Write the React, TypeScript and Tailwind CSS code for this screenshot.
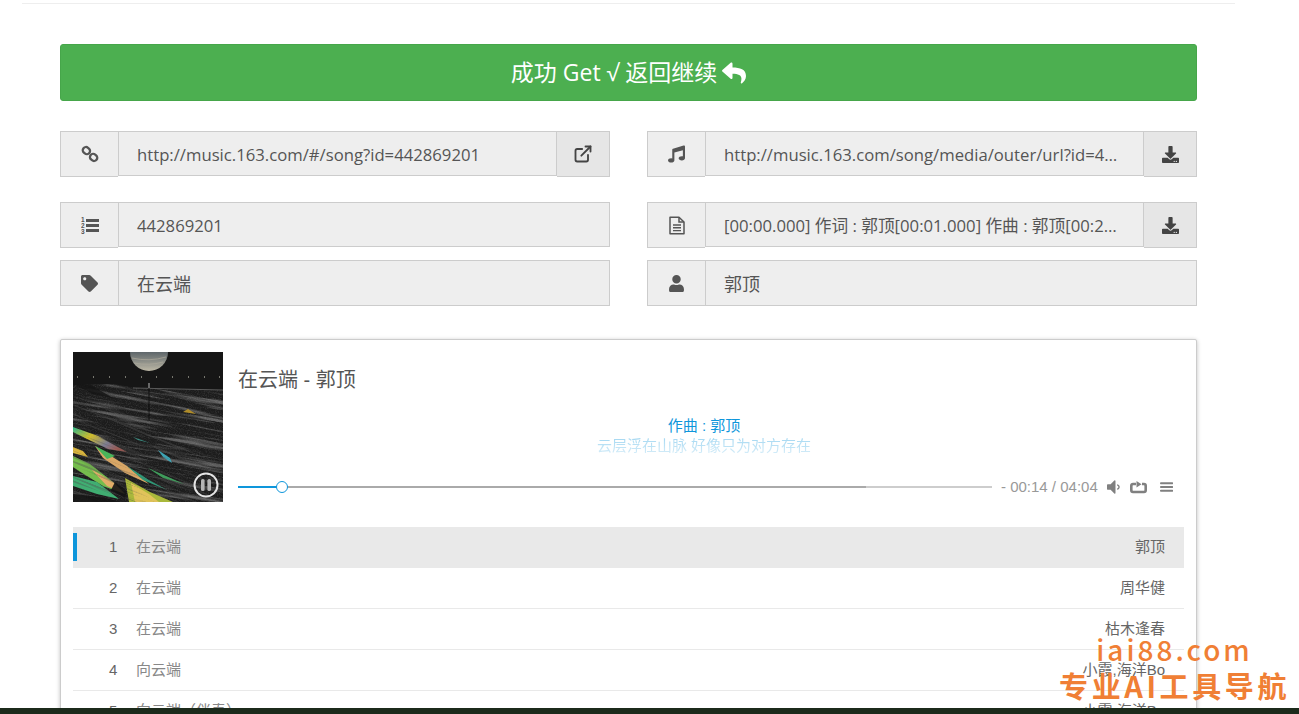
import type { ReactNode } from 'react';
import { ExternalLink } from 'lucide-react';
import { FaDownload, FaMusic, FaReply, FaTag, FaUser } from 'react-icons/fa';

const tracks = [
  { no: 1, title: '在云端', artist: '郭顶' },
  { no: 2, title: '在云端', artist: '周华健' },
  { no: 3, title: '在云端', artist: '枯木逢春' },
  { no: 4, title: '向云端', artist: '小霞,海洋Bo' },
  { no: 5, title: '向云端（伴奏）', artist: '小霞,海洋Bo' },
];

function LinkIcon() {
  return (
    <svg width="18" height="18" viewBox="0 0 18 18" fill="none" stroke="#555" strokeWidth="2.3">
      <rect x="1.6" y="2.4" width="7.6" height="6.4" rx="3.2" transform="rotate(40 5.4 5.6)" />
      <rect x="8.8" y="9.2" width="7.6" height="6.4" rx="3.2" transform="rotate(40 12.6 12.4)" />
    </svg>
  );
}

function ListIcon() {
  return (
    <svg width="18" height="20" viewBox="0 0 18 20" fill="#555">
      <rect x="5" y="4" width="13" height="3" />
      <rect x="5" y="9" width="13" height="3" />
      <rect x="5" y="14" width="13" height="3" />
      <text x="0" y="7" fontSize="6.5" fontWeight="700" fontFamily="Liberation Sans">1</text>
      <text x="0" y="13" fontSize="6.5" fontWeight="700" fontFamily="Liberation Sans">2</text>
      <text x="0" y="19" fontSize="6.5" fontWeight="700" fontFamily="Liberation Sans">3</text>
    </svg>
  );
}

function FileIcon() {
  return (
    <svg width="16" height="19" viewBox="0 0 16 19" fill="none" stroke="#555" strokeWidth="1.5">
      <path d="M1 1.2 H10 L15 6 V17.8 H1 Z" strokeLinejoin="round" />
      <path d="M10 1.2 V6 H15" />
      <path d="M4 9 H12 M4 11.8 H12 M4 14.6 H12" strokeWidth="1.4" />
    </svg>
  );
}

function Field({ icon, text, action, big, tall }: { icon: ReactNode; text: string; action?: ReactNode; big?: boolean; tall?: boolean }) {
  return (
    <div className="flex items-start min-w-0">
      <div className="w-[58px] h-[46px] shrink-0 flex items-center justify-center bg-[#eeeeee] border border-[#cccccc] border-r-0 text-[#555555]">
        {icon}
      </div>
      <div className={`flex-1 min-w-0 bg-[#eeeeee] border border-[#cccccc] pl-[18px] pr-[24px] text-[#555555] truncate ${tall ? 'h-[46px] leading-[46px]' : 'h-[45px] leading-[45px]'} ${big ? 'text-[18px]' : 'text-[16.7px]'}`}>
        {text}
      </div>
      {action && (
        <div className="w-[53px] h-[46px] shrink-0 flex items-center justify-center bg-[#e6e6e6] border border-[#cccccc] border-l-0 text-[#444444]">
          {action}
        </div>
      )}
    </div>
  );
}

function AlbumArt() {
  return (
    <svg className="w-[150px] h-[150px] shrink-0" viewBox="0 0 150 150">
      <defs>
        <filter id="streaks" x="0" y="0" width="100%" height="100%">
          <feTurbulence type="fractalNoise" baseFrequency="0.012 0.3" numOctaves="3" seed="4" />
          <feColorMatrix values="0 0 0 0 1  0 0 0 0 1  0 0 0 0 1  4 0 0 0 -2" />
        </filter>
        <filter id="darkStreaks" x="0" y="0" width="100%" height="100%">
          <feTurbulence type="fractalNoise" baseFrequency="0.015 0.45" numOctaves="2" seed="12" />
          <feColorMatrix values="0 0 0 0 0.08  0 0 0 0 0.08  0 0 0 0 0.08  6 0 0 0 -3.1" />
        </filter>
        <filter id="grain" x="0" y="0" width="100%" height="100%">
          <feTurbulence type="fractalNoise" baseFrequency="0.9" numOctaves="2" seed="9" />
          <feColorMatrix values="0 0 0 0 1  0 0 0 0 1  0 0 0 0 1  1.6 0 0 0 -0.7" />
        </filter>
        <filter id="soft">
          <feGaussianBlur stdDeviation="0.35" />
        </filter>
        <linearGradient id="planet" x1="0" y1="0" x2="0" y2="1">
          <stop offset="0.5" stopColor="#5f676b" />
          <stop offset="0.75" stopColor="#8d8f88" />
          <stop offset="1" stopColor="#bdb8a6" />
        </linearGradient>
        <linearGradient id="rainbow" x1="0" y1="0" x2="1" y2="0.6">
          <stop offset="0" stopColor="#2fb58a" />
          <stop offset="0.4" stopColor="#d0bd2c" />
          <stop offset="0.75" stopColor="#7c7d92" />
          <stop offset="1" stopColor="#a05a52" />
        </linearGradient>
        <clipPath id="land">
          <path d="M0 33 L40 32 L70 37 L150 38 L150 150 L0 150 Z" />
        </clipPath>
      </defs>
      <rect width="150" height="150" fill="#161616" />
      <circle cx="76" cy="0" r="19" fill="url(#planet)" />
      <path d="M59 6 Q76 10 93 5 M61 11 Q76 14 90 10" stroke="#a9a699" strokeWidth="0.8" fill="none" />
      <g fill="#77776f">
        {[4, 20, 36, 52, 68, 83, 99, 115, 131, 146].map((x) => (
          <rect key={x} x={x} y="24" width="1" height="2" />
        ))}
      </g>
      <g clipPath="url(#land)">
        <rect y="30" width="150" height="120" fill="#1c1c1c" />
        <g transform="rotate(10 40 90)">
          <rect x="-40" y="0" width="240" height="190" filter="url(#streaks)" opacity="0.3" />
        </g>
        <rect y="30" width="150" height="120" filter="url(#grain)" opacity="0.16" />
        <g filter="url(#soft)">
          <path d="M0 75 L25 84 L54 100 L35 97 L12 86 L0 80 Z" fill="url(#rainbow)" />
          <path d="M22 94 L54 114 L76 132 L52 121 L30 106 Z" fill="#d9a766" />
          <path d="M22 94 L42 104 L34 107 Z" fill="#49b45a" />
          <path d="M54 114 L76 128 L94 138 L70 128 Z" fill="#2f9a78" />
          <path d="M0 104 L17 112 L40 130 L52 142 L30 134 L6 119 L0 115 Z" fill="#74bd4e" />
          <path d="M18 117 L40 130 L52 142 L34 134 Z" fill="#e2ad68" />
          <path d="M0 124 L24 130 L46 147 L24 142 L6 136 L0 134 Z" fill="#3fae72" />
          <path d="M0 95 L10 99 L15 105 L0 101 Z" fill="#d8b43c" />
          <path d="M52 126 L77 140 L100 150 L56 150 Z" fill="#a9b83a" />
          <path d="M58 131 L76 142 L86 150 L62 150 Z" fill="#e0c35a" />
          <path d="M75 116 L111 132 L90 126 Z" fill="#3f9d5b" />
          <path d="M85 98 L97 106 L99 111 L90 105 Z" fill="#3ea4b5" />
          <path d="M60 85 L77 91 L65 88 Z" fill="#3c8f84" />
          <path d="M110 60 L115 57 L123 62 Z" fill="#b08d2c" />
        </g>
        <g transform="rotate(22 40 110)">
          <rect x="-40" y="60" width="180" height="110" filter="url(#darkStreaks)" opacity="0.4" />
        </g>
        <path d="M42 130 L54 139 L52 146 L38 138 Z" fill="#141414" opacity="0.9" />
        <path d="M0 32 L18 33 L40 46 L20 42 Z" fill="#141414" opacity="0.8" />
        <path d="M0 142 L30 145 L46 150 L0 150 Z" fill="#141414" opacity="0.8" />
      </g>
      <path d="M60 36 L150 38" stroke="#8a8a8a" strokeWidth="0.6" />
      <path d="M76 33 L76 68" stroke="#0c0c0c" strokeWidth="0.9" />
      <path d="M76 31 L76 36" stroke="#cfcfcf" strokeWidth="0.9" />
      <circle cx="133" cy="133" r="11.5" fill="none" stroke="#e4e4e4" strokeWidth="2" />
      <rect x="128" y="127" width="3.6" height="12" rx="1.6" fill="#b5b5b5" />
      <rect x="134.4" y="127" width="3.6" height="12" rx="1.6" fill="#b5b5b5" />
    </svg>
  );
}

function PlayerIcons() {
  return (
    <div className="flex items-center">
      <svg className="w-[13px] h-[20px] ml-[9px]" viewBox="0 0 21 32" fill="#808080">
        <path d="M13.728 6.272v19.456q0 0.448-0.352 0.8t-0.8 0.32-0.8-0.32l-5.952-5.952h-4.672q-0.48 0-0.8-0.352t-0.352-0.8v-6.848q0-0.48 0.352-0.8t0.8-0.352h4.672l5.952-5.952q0.32-0.32 0.8-0.32t0.8 0.32 0.352 0.8zM20.576 16q0 1.344-0.768 2.528t-2.016 1.664q-0.16 0.096-0.448 0.096-0.448 0-0.8-0.32t-0.32-0.832q0-0.384 0.192-0.64t0.544-0.448 0.608-0.384 0.512-0.64 0.192-1.024-0.192-1.024-0.512-0.64-0.608-0.384-0.544-0.448-0.192-0.64q0-0.48 0.32-0.832t0.8-0.32q0.288 0 0.448 0.096 1.248 0.48 2.016 1.664t0.768 2.528z" />
      </svg>
      <svg className="w-[17px] h-[13px] ml-[10px]" viewBox="0 0 17 13" fill="none" stroke="#808080" strokeWidth="2.6">
        <path d="M6 3 H3 Q1.3 3 1.3 4.7 V9.3 Q1.3 11 3 11 H14 Q15.7 11 15.7 9.3 V4.7 Q15.7 3 14 3 H12" />
        <path d="M6.5 0 L11.5 3.2 L6.5 6.4 Z" fill="#808080" stroke="none" />
      </svg>
      <svg className="w-[13px] h-[20px] ml-[13px]" viewBox="0 0 22 32" fill="#808080">
        <path d="M20.8 14.4q0.704 0 1.152 0.48t0.48 1.12-0.48 1.12-1.152 0.48h-19.2q-0.64 0-1.12-0.48t-0.48-1.12 0.48-1.12 1.12-0.48h19.2zM1.6 11.2q-0.64 0-1.12-0.48t-0.48-1.12 0.48-1.12 1.12-0.48h19.2q0.704 0 1.152 0.48t0.48 1.12-0.48 1.12-1.152 0.48h-19.2zM20.8 20.8q0.704 0 1.152 0.48t0.48 1.12-0.48 1.12-1.152 0.48h-19.2q-0.64 0-1.12-0.48t-0.48-1.12 0.48-1.12 1.12-0.48h19.2z" />
      </svg>
    </div>
  );
}

export default function App() {
  return (
    <div className="relative h-screen flex flex-col overflow-hidden bg-white font-['Open_Sans','Noto_Sans_CJK_SC',sans-serif]">
      <main className="flex-1 min-h-0 overflow-hidden pt-[3px]">
        <div className="w-[1213px] ml-[22px] border-t border-[#eeeeee] px-[38px] pt-[40px]">
          <div className="h-[57px] flex items-center justify-center gap-[5px] rounded-[3px] bg-[#4caf50] border border-[#46a64a] text-white text-[23px]">
            <span>成功 Get √ 返回继续</span>
            <FaReply className="w-[24px] h-[24px]" />
          </div>

          <div className="grid grid-cols-2 gap-x-[37px] mt-[30px]">
            <Field icon={<LinkIcon />} text="http://music.163.com/#/song?id=442869201" action={<ExternalLink className="w-[20px] h-[20px]" strokeWidth={2.2} />} />
            <Field icon={<FaMusic className="w-[17px] h-[18px]" />} text="http://music.163.com/song/media/outer/url?id=442869201.mp3" action={<FaDownload className="w-[17px] h-[17px]" />} />
          </div>
          <div className="grid grid-cols-2 gap-x-[37px] mt-[25px]">
            <Field icon={<ListIcon />} text="442869201" />
            <Field icon={<FileIcon />} text="[00:00.000] 作词 : 郭顶[00:01.000] 作曲 : 郭顶[00:28.000] 云层浮在山脉 好像只为对方存在" action={<FaDownload className="w-[17px] h-[17px]" />} />
          </div>
          <div className="grid grid-cols-2 gap-x-[37px] mt-[12px]">
            <Field icon={<FaTag className="w-[17px] h-[17px]" />} text="在云端" big tall />
            <Field icon={<FaUser className="w-[15px] h-[17px]" />} text="郭顶" big tall />
          </div>

          <div className="mt-[33px] rounded-[2px] border border-[#cccccc] shadow-[0_1px_4px_rgba(0,0,0,0.25)] p-[12px] bg-white font-['Liberation_Sans','Noto_Sans_CJK_SC',sans-serif]">
            <div className="flex">
              <AlbumArt />
              <div className="flex-1 min-w-0 ml-[15px] mr-[14px] h-[150px]">
                <div className="mt-[14px] text-[20px] leading-[28px] text-[#555555]">在云端 - 郭顶</div>
                <div className="mt-[22px] text-center text-[15px] leading-[20px]">
                  <div className="text-[#0e96db]">作曲 : 郭顶</div>
                  <div>
                    <span className="inline-block bg-gradient-to-b from-[#0e96db]/40 to-[#0e96db]/15 bg-clip-text text-transparent">云层浮在山脉 好像只为对方存在</span>
                  </div>
                </div>
                <div className="mt-[23px] flex items-center h-[16px]">
                  <div className="relative w-[754px] h-[2px] shrink-0 bg-[#cdcdcd]">
                    <div className="absolute left-0 top-0 h-full w-[628px] bg-[#aaaaaa]" />
                    <div className="absolute left-0 top-0 h-full w-[44px] bg-[#0e96db]" />
                    <div className="absolute left-[38px] top-[-5px] w-[12px] h-[12px] rounded-full bg-white border border-[#0e96db]" />
                  </div>
                  <div className="ml-[9px] text-[15px] text-[#999999] whitespace-nowrap">- 00:14 / 04:04</div>
                  <PlayerIcons />
                </div>
              </div>
            </div>

            <div className="mt-[25px]">
              {tracks.map((t, i) => (
                <div key={t.no} className={`relative h-[41px] flex items-center text-[15px] ${i === 0 ? 'bg-[#e9e9e9]' : 'border-b border-[#e9e9e9]'}`}>
                  {i === 0 && <div className="absolute left-0 top-[6px] w-[4px] h-[28px] bg-[#0e96db]" />}
                  <span className="w-[63px] pl-[36px] text-[#666666]">{t.no}</span>
                  <span className="flex-1 text-[#888888]">{t.title}</span>
                  <span className="pr-[19px] text-[#666666]">{t.artist}</span>
                </div>
              ))}
            </div>
          </div>
        </div>
      </main>
      <div className="h-[6px] shrink-0 bg-[#1c2a1b]" />

      <div className="absolute right-[9px] bottom-[11px] flex flex-col items-center text-[#f07f35] font-['Noto_Sans_CJK_SC',sans-serif] font-bold">
        <div className="text-[28px] leading-[36px] tracking-[3px] font-medium">iai88.com</div>
        <div className="text-[29px] leading-[36px] tracking-[3.6px]">专业AI工具导航</div>
      </div>
    </div>
  );
}
